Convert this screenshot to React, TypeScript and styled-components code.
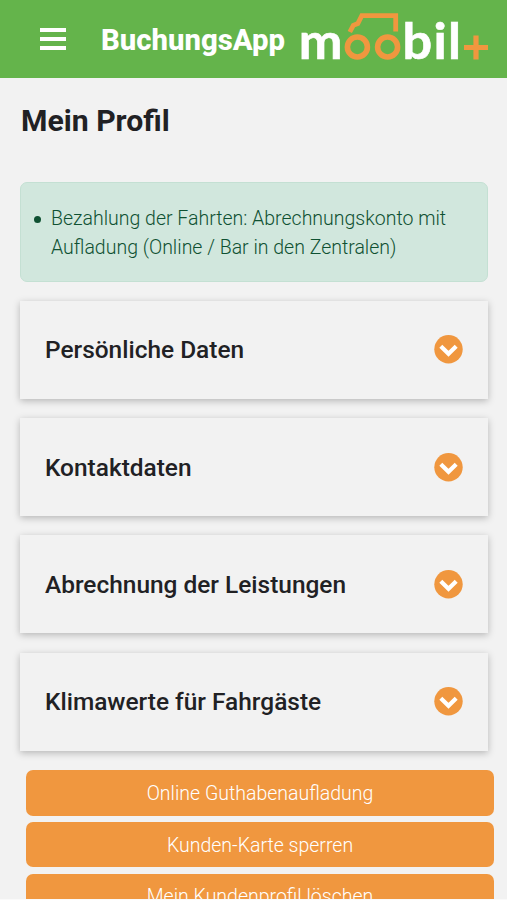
import React from "react";
import styled, { createGlobalStyle } from "styled-components";

const GlobalStyle = createGlobalStyle`
  html, body { margin: 0; height: 100%; overflow: hidden; background: #fafafa; }
  body { font-family: Roboto, "Liberation Sans", sans-serif; color: #212124; }
  * { box-sizing: border-box; }
`;

const Page = styled.div`
  height: 899px;
  overflow: hidden;
  background: #f2f2f2;
`;

const Header = styled.header`
  height: 78px;
  display: flex;
  align-items: center;
  padding-left: 40px;
  background: #64b44b;
`;

const MenuButton = styled.button`
  display: flex;
  flex-direction: column;
  gap: 5px;
  width: 26px;
  padding: 0;
  border: 0;
  background: none;
`;

const MenuBar = styled.span`
  height: 4px;
  background: #fff;
`;

const AppName = styled.span`
  width: 186px;
  margin: 2px 3px 0 35px;
  font-size: 29.3px;
  line-height: 34px;
  font-weight: 800;
  color: #fff;
  white-space: nowrap;
`;

const Logo = styled.svg`
  width: 210px;
  height: 78px;
  flex: none;
`;

const Title = styled.h1`
  margin: 0;
  padding: 24px 0 0 21px;
  height: 103.5px;
  font-size: 30.2px;
  line-height: 38px;
  font-weight: 700;
`;

const Notice = styled.ul`
  margin: 0 19px 0 20px;
  height: 100px;
  padding: 21px 24px 0 30px;
  border: 1px solid #c4e0d3;
  border-radius: 7px;
  background: #d1e7dd;
  color: #0f5132;
  font-size: 19.5px;
  line-height: 29.3px;
  font-weight: 300;
  list-style: none;
`;

const NoticeItem = styled.li`
  position: relative;

  &::before {
    content: "";
    position: absolute;
    left: -17px;
    top: 12px;
    width: 7px;
    height: 7px;
    border-radius: 50%;
    background: currentColor;
  }
`;

const Sections = styled.div`
  display: grid;
  grid-auto-rows: 98px;
  gap: 19.3px;
  margin: 19.4px 19px 0 20px;
`;

const Section = styled.section`
  display: flex;
  align-items: center;
  justify-content: space-between;
  padding: 0 25px;
  background: #f2f2f2;
  box-shadow: 0 2px 7px rgba(0, 0, 0, 0.25);
`;

const SectionTitle = styled.h2`
  margin: 0;
  padding-top: 1px;
  font-size: 24.45px;
  line-height: 32px;
  font-weight: 500;
`;

const Chevron = styled.svg`
  width: 29px;
  height: 29px;
`;

const Actions = styled.div`
  display: grid;
  grid-auto-rows: 45.6px;
  gap: 6.2px;
  margin: 19.2px 13px 0 26px;
`;

const Action = styled.button`
  padding: 1px 0 0;
  border: 0;
  border-radius: 7px;
  background: #f0973f;
  color: #fff;
  font: 300 19.5px/29px Roboto, "Liberation Sans", sans-serif;
`;

const sections = ["Persönliche Daten", "Kontaktdaten", "Abrechnung der Leistungen", "Klimawerte für Fahrgäste"];
const actions = ["Online Guthabenaufladung", "Kunden-Karte sperren", "Mein Kundenprofil löschen"];

export default function App() {
  return (
    <>
      <GlobalStyle />
      <Page>
        <Header>
          <MenuButton aria-label="Menü">
            <MenuBar />
            <MenuBar />
            <MenuBar />
          </MenuButton>
          <AppName>BuchungsApp</AppName>
          <Logo viewBox="290 0 210 78" aria-label="moobil+">
            <g fill="#fff" stroke="#fff" strokeWidth="0.6" fontFamily="Lato, sans-serif" fontWeight="700" fontSize="48.8">
              <text transform="translate(298.7 58.800) scale(1.07 1)">m</text>
              <text transform="translate(402.500 58.800) scale(1.07 1)" letterSpacing="1.2">bil</text>
            </g>
            <g fill="none" stroke="#f0973f" strokeWidth="5.6">
              <circle cx="357.4" cy="47" r="10" />
              <circle cx="387.6" cy="47" r="10" />
              <path strokeWidth="4.8" d="M349.800 32L353.300 25.300L357.800 23.600L361.800 15.700H395.700V31.500" />
              <path strokeWidth="5.200" d="M464 47.500H488M476 35.500V59.500" />
            </g>
          </Logo>
        </Header>
        <Title>Mein Profil</Title>
        <Notice>
          <NoticeItem>Bezahlung der Fahrten: Abrechnungskonto mit Aufladung (Online / Bar in den Zentralen)</NoticeItem>
        </Notice>
        <Sections>
          {sections.map((name) => (
            <Section key={name}>
              <SectionTitle>{name}</SectionTitle>
              <Chevron viewBox="0 0 29 29">
                <circle cx="14.500" cy="14.200" r="14.200" fill="#f0973f" />
                <path d="M6.800 11.200L14.500 18.800L22.200 11.200" fill="none" stroke="#fff" strokeWidth="4.200" />
              </Chevron>
            </Section>
          ))}
        </Sections>
        <Actions>
          {actions.map((name) => (
            <Action key={name}>{name}</Action>
          ))}
        </Actions>
      </Page>
    </>
  );
}
